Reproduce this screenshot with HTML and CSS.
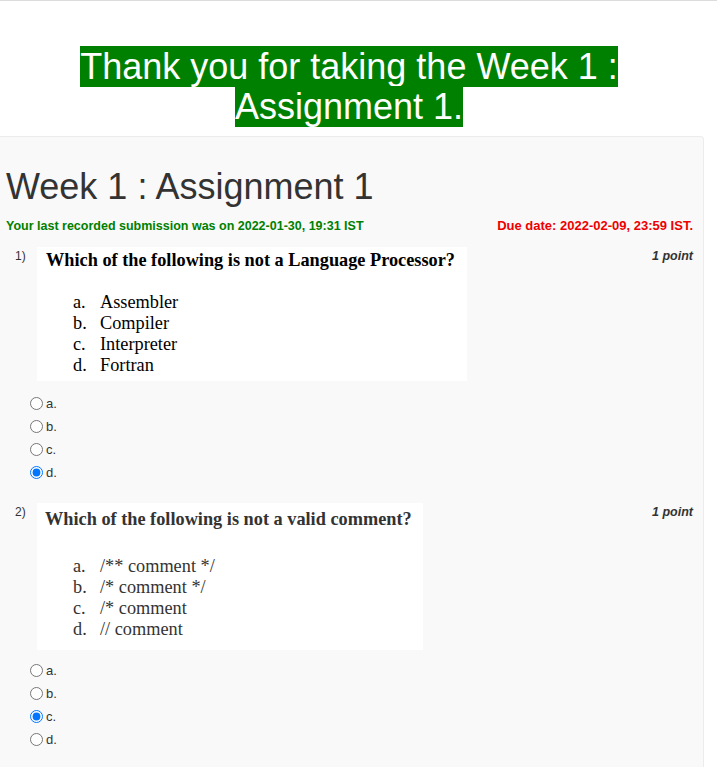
FILE: index.html
```html
<!DOCTYPE html>
<html>
<head>
<meta charset="utf-8">
<link rel="stylesheet" href="styles.css">
</head>
<body>
<div class="topline"></div>
<div class="thanks"><h1 class="thanks-title"><span class="thanks-text">Thank you for taking the Week 1 : Assignment 1.</span></h1></div>
<div class="assessment">
  <h2 class="assessment-title">Week 1 : Assignment 1</h2>
  <div class="status-row">
    <span class="submitted">Your last recorded submission was on 2022-01-30, 19:31 IST</span>
    <span class="due">Due date: 2022-02-09, 23:59 IST.</span>
  </div>

  <div class="question">
    <div class="q-head">
      <div class="q-num">1)</div>
      <div class="q-box">
        <p class="q-text">Which of the following is not a Language Processor?</p>
        <ol class="q-list">
          <li><span class="mk">a.</span>Assembler</li>
          <li><span class="mk">b.</span>Compiler</li>
          <li><span class="mk">c.</span>Interpreter</li>
          <li><span class="mk">d.</span>Fortran</li>
        </ol>
      </div>
      <div class="q-points">1 point</div>
    </div>
    <div class="options">
      <label class="opt"><input type="radio" name="q1"><span>a.</span></label>
      <label class="opt"><input type="radio" name="q1"><span>b.</span></label>
      <label class="opt"><input type="radio" name="q1"><span>c.</span></label>
      <label class="opt"><input type="radio" name="q1" checked><span>d.</span></label>
    </div>
  </div>

  <div class="question q2">
    <div class="q-head">
      <div class="q-num">2)</div>
      <div class="q-box q-box-2">
        <p class="q-text q-text-2">Which of the following is not a valid comment?</p>
        <ol class="q-list q-list-2">
          <li><span class="mk">a.</span>/** comment */</li>
          <li><span class="mk">b.</span>/* comment */</li>
          <li><span class="mk">c.</span>/* comment</li>
          <li><span class="mk">d.</span>// comment</li>
        </ol>
      </div>
      <div class="q-points">1 point</div>
    </div>
    <div class="options">
      <label class="opt"><input type="radio" name="q2"><span>a.</span></label>
      <label class="opt"><input type="radio" name="q2"><span>b.</span></label>
      <label class="opt"><input type="radio" name="q2" checked><span>c.</span></label>
      <label class="opt"><input type="radio" name="q2"><span>d.</span></label>
    </div>
  </div>
</div>
</body>
</html>
```

FILE: styles.css
```css
html, body {
  margin: 0;
  padding: 0;
  background: #ffffff;
  font-family: "Liberation Sans", Arial, sans-serif;
  color: #333333;
  overflow: hidden;
}

.topline {
  height: 1px;
  background: #dcdcdc;
}

.thanks {
  width: 698px;
  padding-top: 46px;
  text-align: center;
}

.thanks-title {
  margin: 0;
  font-size: 36px;
  font-weight: normal;
  line-height: 40px;
}

.thanks-text {
  background: #008000;
  color: #ffffff;
}

.assessment {
  box-sizing: border-box;
  width: 704px;
  margin-top: 9px;
  padding: 0 10px 40px 6px;
  background: #f9f9f9;
  border: 1px solid #ececec;
  border-left: 0;
  border-radius: 0 4px 0 0;
}

.assessment-title {
  margin: 0;
  padding-top: 30px;
  font-size: 36px;
  font-weight: normal;
  line-height: 40px;
  color: #333333;
}

.status-row {
  display: flex;
  justify-content: space-between;
  align-items: baseline;
  margin-top: 11px;
  font-weight: bold;
  line-height: 15px;
}

.submitted {
  color: #008000;
  font-size: 12.5px;
}

.due {
  color: #ee0000;
  font-size: 13px;
}

.question {
  margin-top: 13px;
}

.question.q2 {
  margin-top: 19px;
}

.q-head {
  display: flex;
  align-items: flex-start;
}

.q-num {
  box-sizing: border-box;
  width: 31px;
  padding-left: 9px;
  padding-top: 2px;
  font-size: 12px;
  line-height: 14px;
  color: #333333;
}

.q-box {
  background: #ffffff;
  padding: 3px 12px 5px 9px;
  font-family: "Liberation Serif", "Times New Roman", serif;
  font-size: 18.3px;
  line-height: 21px;
  color: #000000;
}

.q-box-2 {
  padding: 6px 11px 10px 8px;
  color: #333333;
}

.q-text {
  margin: 0;
  font-weight: bold;
}

.q-list {
  margin: 21px 0 0 0;
  padding: 0 0 0 27px;
  list-style: none;
}

.q-list-2 {
  margin-top: 26px;
  padding-left: 28px;
}

.mk {
  display: inline-block;
  width: 27px;
}

.q-points {
  margin-left: auto;
  padding-top: 2px;
  font-size: 12.5px;
  line-height: 14px;
  font-weight: bold;
  font-style: italic;
  color: #333333;
}

.options {
  margin-top: 11px;
  padding-left: 19px;
}

.q2 .options {
  margin-top: 9px;
}

.opt {
  display: flex;
  align-items: center;
  height: 23px;
  font-size: 13px;
  color: #333333;
}

.opt input {
  margin: 0 3px 0 5px;
  width: 13px;
  height: 13px;
}
```
